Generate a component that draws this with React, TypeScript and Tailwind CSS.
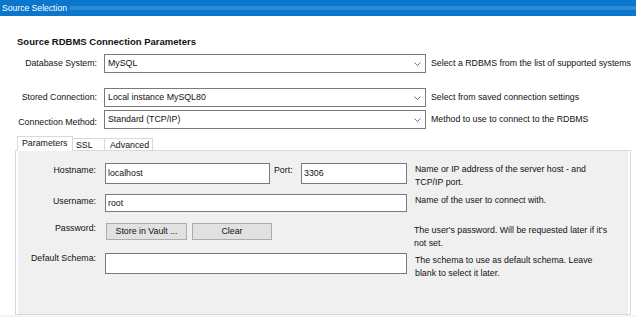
import React from "react";

const font = "font-['Liberation_Sans',Arial,sans-serif]";

function Chevron() {
  return (
    <svg width="7" height="4" viewBox="0 0 7 4" className="shrink-0">
      <path d="M0.5 0.5 L3.5 3.5 L6.5 0.5" fill="none" stroke="#707070" strokeWidth="1" />
    </svg>
  );
}

function ComboRow({
  label,
  value,
  help,
  className = "",
  labelClass = "",
}: {
  label: string;
  value: string;
  help: string;
  className?: string;
  labelClass?: string;
}) {
  return (
    <div className={`flex items-center h-[19px] ${className}`}>
      <div className={`w-[82px] text-right whitespace-nowrap ${labelClass}`}>{label}</div>
      <div className="ml-[7px] w-[322px] h-[19px] border border-[#7a7a7a] bg-white flex items-center justify-between pl-[3px] pr-[4px]">
        <span>{value}</span>
        <Chevron />
      </div>
      <div className="ml-[5px] whitespace-nowrap">{help}</div>
    </div>
  );
}

function TextBox({ value = "", w, h }: { value?: string; w: string; h: string }) {
  return (
    <div className={`${w} ${h} border border-[#7a7a7a] bg-white flex items-center px-[2px] shrink-0`}>
      {value}
    </div>
  );
}

function Button({ children, w }: { children: React.ReactNode; w: string }) {
  return (
    <div className={`${w} h-[17px] bg-[#e1e1e1] border border-[#adadad] flex items-center justify-center whitespace-nowrap`}>
      {children}
    </div>
  );
}

export default function App() {
  return (
    <div className={`w-[636px] h-[317px] bg-white overflow-hidden text-[8.8px] leading-[13px] text-[#111] ${font}`}>
      <div className="h-[16px] bg-[#0b77cc] flex items-center">
        <span className="pl-[2px] pr-[3px] text-white text-[8.6px]">Source Selection</span>
        <div className="flex-1 h-[4px] bg-[radial-gradient(circle,#62aae6_0.6px,transparent_0.8px)] bg-[length:2px_2px] opacity-80" />
      </div>

      <div className="pl-[15px]">
        <div className="pl-[2px] mt-[19px] font-bold text-[9.5px] h-[13px]">Source RDBMS Connection Parameters</div>

        <ComboRow className="mt-[6px]" label="Database System:" value="MySQL" help="Select a RDBMS from the list of supported systems" />
        <ComboRow className="mt-[15px]" label="Stored Connection:" value="Local instance MySQL80" help="Select from saved connection settings" />
        <ComboRow className="mt-[3px]" labelClass="pt-[6px]" label="Connection Method:" value="Standard (TCP/IP)" help="Method to use to connect to the RDBMS" />

        <div className="mt-[7px] flex items-end pl-[2px] h-[14px]">
          <div className="relative z-10 h-[15px] -mb-[1px] w-[56px] border border-b-0 border-[#d9d9d9] bg-white pl-[4px]">Parameters</div>
          <div className="h-[12px] w-[32px] border border-b-0 border-l-0 border-[#d9d9d9] bg-white pl-[3px] leading-[12px]">SSL</div>
          <div className="h-[12px] w-[48px] border border-b-0 border-l-0 border-[#d9d9d9] bg-white pl-[5px] leading-[12px]">Advanced</div>
        </div>

        <div className="w-[616px] h-[165px] border border-[#d9d9d9] bg-white">
          <div className="h-full bg-[#f0f0f0] border-l-2 border-r-2 border-white pt-[12px]">
            <div className="flex items-start h-[21px]">
              <div className="w-[78px] text-right pt-[1px] whitespace-nowrap">Hostname:</div>
              <div className="ml-[9px]"><TextBox value="localhost" w="w-[165px]" h="h-[21px]" /></div>
              <div className="ml-[4px] w-[27px] pt-[1px]">Port:</div>
              <TextBox value="3306" w="w-[106px]" h="h-[21px]" />
              <div className="ml-[8px] whitespace-nowrap">
                Name or IP address of the server host - and
                <br />
                TCP/IP port.
              </div>
            </div>

            <div className="flex items-start h-[18px] mt-[10px]">
              <div className="w-[78px] text-right pt-[1px] whitespace-nowrap">Username:</div>
              <div className="ml-[9px]"><TextBox value="root" w="w-[302px]" h="h-[18px]" /></div>
              <div className="ml-[8px] whitespace-nowrap">Name of the user to connect with.</div>
            </div>

            <div className="flex items-start h-[17px] mt-[11px]">
              <div className="w-[78px] text-right -mt-[1px] whitespace-nowrap">Password:</div>
              <div className="ml-[10px] flex gap-[5px] shrink-0">
                <Button w="w-[81px]">Store in Vault ...</Button>
                <Button w="w-[80px]">Clear</Button>
              </div>
              <div className="ml-[142px] pt-[1px] whitespace-nowrap">
                The user's password. Will be requested later if it's
                <br />
                not set.
              </div>
            </div>

            <div className="flex items-start h-[21px] mt-[13px]">
              <div className="w-[78px] text-right -mt-[1px] whitespace-nowrap">Default Schema:</div>
              <div className="ml-[9px]"><TextBox w="w-[302px]" h="h-[21px]" /></div>
              <div className="ml-[8px] pt-[1px] whitespace-nowrap">
                The schema to use as default schema. Leave
                <br />
                blank to select it later.
              </div>
            </div>
          </div>
        </div>
      </div>
      <div className="h-[4px] bg-[#f5f5f5]" />
    </div>
  );
}
